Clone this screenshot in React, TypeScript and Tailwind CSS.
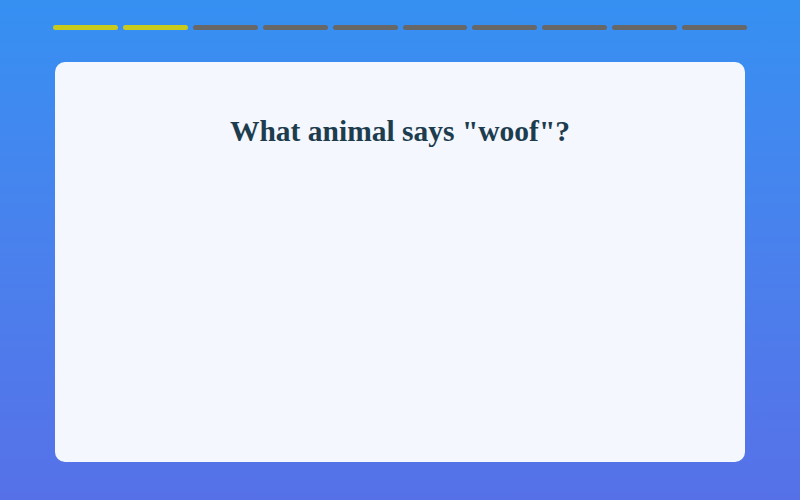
export default function App() {
  const total = 10
  const done = 2

  return (
    <div className="w-[800px] h-[500px] bg-gradient-to-b from-[#3590f2] to-[#5671e8] px-[53px] pt-[25px]">
      <div className="flex gap-[5px]">
        {Array.from({ length: total }).map((_, i) => (
          <div
            key={i}
            className={i < done ? 'h-[5px] flex-1 rounded-full bg-[#c9cb1c]' : 'h-[5px] flex-1 rounded-full bg-[#676767]'}
          />
        ))}
      </div>

      <div className="mx-[2px] mt-[32px] h-[400px] rounded-[10px] bg-[#f4f7fe] pt-[49px]">
        <h1 className="text-center text-[29.5px] font-bold leading-[40px] text-[#1d3d4e] font-['Liberation_Serif',serif]">
          What animal says "woof"?
        </h1>
      </div>
    </div>
  )
}
